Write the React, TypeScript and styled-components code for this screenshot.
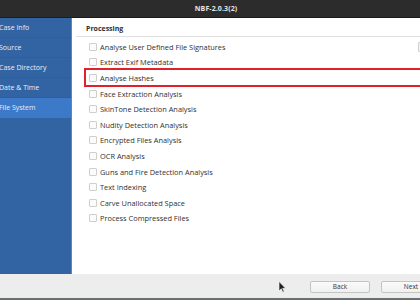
import styled, { createGlobalStyle } from "styled-components";

const GlobalStyle = createGlobalStyle`
  html, body {
    margin: 0;
    padding: 0;
    background: #ffffff;
  }
  * {
    box-sizing: border-box;
  }
`;

const navItems = ["Case Info", "Source", "Case Directory", "Date & Time", "File System"];

const options = [
  "Analyse User Defined File Signatures",
  "Extract Exif Metadata",
  "Analyse Hashes",
  "Face Extraction Analysis",
  "SkinTone Detection Analysis",
  "Nudity Detection Analysis",
  "Encrypted Files Analysis",
  "OCR Analysis",
  "Guns and Fire Detection Analysis",
  "Text Indexing",
  "Carve Unallocated Space",
  "Process Compressed Files",
];

const App: React.FC = () => {
  return (
    <Window>
      <GlobalStyle />
      <TitleBar>NBF-2.0.3(2)</TitleBar>
      <Body>
        <Sidebar>
          {navItems.map((item) => (
            <NavItem key={item} $active={item === "File System"}>
              {item}
            </NavItem>
          ))}
        </Sidebar>
        <Main>
          <SectionTitle>Processing</SectionTitle>
          <OptionList>
            {options.map((opt, index) => (
              <OptionRow key={opt} $highlighted={opt === "Analyse Hashes"}>
                <Checkbox />
                <OptionLabel>{opt}</OptionLabel>
                {(index === 0 || index === 2) && <EdgeWidget />}
              </OptionRow>
            ))}
          </OptionList>
        </Main>
      </Body>
      <Footer>
        <Cursor viewBox="0 0 8 12">
          <path d="M1 0.5 L1 10 L3.3 7.8 L4.8 11.2 L6.2 10.6 L4.7 7.3 L7.6 7.3 Z" fill="#222" stroke="#fff" strokeWidth="0.6" />
        </Cursor>
        <FooterButton>Back</FooterButton>
        <FooterButton>Next</FooterButton>
      </Footer>
      <BottomStrip />
    </Window>
  );
};

export default App;

const Window = styled.div`
  width: 420px;
  height: 300px;
  display: flex;
  flex-direction: column;
  overflow: hidden;
  font-family: "Open Sans", "Noto Sans", sans-serif;
  background: #ffffff;
`;

const TitleBar = styled.div`
  height: 18px;
  flex-shrink: 0;
  display: flex;
  align-items: center;
  justify-content: center;
  padding-left: 12px;
  background: #2c2c2c;
  border-bottom: 1px solid #1c1c1c;
  color: #e6e6e6;
  font-size: 7px;
  font-weight: 700;
  letter-spacing: 0.1px;
`;

const Body = styled.div`
  flex: 1;
  display: flex;
  min-height: 0;
`;

const Sidebar = styled.div`
  width: 72px;
  flex-shrink: 0;
  display: flex;
  flex-direction: column;
  background: #3264a3;
  border-right: 1px solid #5b86bf;
`;

const NavItem = styled.div<{ $active?: boolean }>`
  height: 20px;
  display: flex;
  align-items: center;
  margin-left: -1px;
  color: #e9eef6;
  font-size: 7px;
  background: ${({ $active }) => ($active ? "#3c79c8" : "transparent")};
  border-bottom: 1px solid ${({ $active }) => ($active ? "#3c79c8" : "#2f5e99")};
`;

const Main = styled.div`
  flex: 1;
  display: flex;
  flex-direction: column;
  padding: 6px 0 0 4px;
  overflow: hidden;
`;

const SectionTitle = styled.div`
  padding: 0 0 2px 10px;
  border-bottom: 1px solid #e0e0e0;
  color: #2e2e2e;
  font-size: 7px;
  font-weight: 700;
  line-height: 10px;
`;

const OptionList = styled.div`
  display: flex;
  flex-direction: column;
  padding: 2px 0 0 8px;
`;

const OptionRow = styled.div<{ $highlighted?: boolean }>`
  width: 340px;
  height: ${({ $highlighted }) => ($highlighted ? "19px" : "15.6px")};
  margin: ${({ $highlighted }) => ($highlighted ? "-2px 0 -1.4px" : "0")};
  display: flex;
  align-items: center;
  gap: 3px;
  padding-left: ${({ $highlighted }) => ($highlighted ? "3px" : "5px")};
  border: ${({ $highlighted }) => ($highlighted ? "2px solid #e0202a" : "none")};
  position: relative;
`;

const Checkbox = styled.span`
  width: 8px;
  height: 8px;
  flex-shrink: 0;
  border: 1px solid #cfcfcf;
  border-radius: 1px;
  background: #fbfbfb;
`;

const OptionLabel = styled.span`
  color: #303030;
  font-size: 7.4px;
  white-space: nowrap;
`;

const EdgeWidget = styled.span`
  position: absolute;
  left: 334px;
  top: 50%;
  transform: translateY(-50%);
  width: 4px;
  height: 10px;
  border: 1px solid #cfcfcf;
  border-radius: 1px;
  background: #f4f4f4;
`;

const Footer = styled.div`
  height: 24px;
  flex-shrink: 0;
  display: flex;
  align-items: center;
  justify-content: flex-end;
  gap: 11px;
  margin-right: -21px;
  padding-top: 1px;
  background: #ededed;
`;

const Cursor = styled.svg`
  width: 8px;
  height: 12px;
  margin-right: 13px;
`;

const FooterButton = styled.button`
  width: 60px;
  height: 12px;
  padding: 0;
  display: flex;
  align-items: center;
  justify-content: center;
  border: 1px solid #c4c4c4;
  border-radius: 2px;
  background: linear-gradient(#fafafa, #f0f0f0);
  color: #333;
  font-family: "Open Sans", "Noto Sans", sans-serif;
  font-size: 6.5px;
`;

const BottomStrip = styled.div`
  height: 2px;
  flex-shrink: 0;
  background: #6a6f70;
`;
